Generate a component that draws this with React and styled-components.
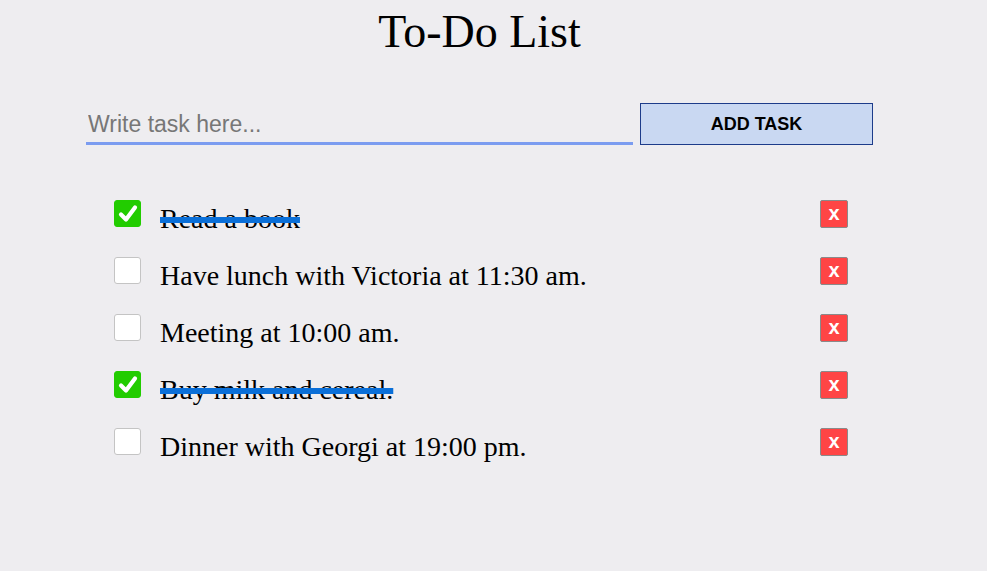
import styled, { createGlobalStyle } from "styled-components";
import { useState } from "react";

const GlobalStyle = createGlobalStyle`
  html, body {
    margin: 0;
    padding: 0;
    background-color: #eeedf0;
  }
  body {
    font-family: "Liberation Serif", "Times New Roman", serif;
    min-height: 571px;
  }
`;

const Wrapper = styled.div`
  width: 787px;
  margin-left: 86px;
  padding-top: 5px;
`;

const Title = styled.h1`
  margin: 0;
  text-align: center;
  font-family: "Liberation Serif", "Times New Roman", serif;
  font-weight: normal;
  font-size: 46px;
  color: #000;
`;

const Form = styled.form`
  display: flex;
  align-items: flex-end;
  gap: 7px;
  margin-top: 45px;
`;

const TaskInput = styled.input`
  width: 547px;
  box-sizing: border-box;
  height: 42px;
  padding: 4px 2px 0;
  border: none;
  border-bottom: 3px solid #7b9cf0;
  background: transparent;
  font-family: "Liberation Sans", Arial, sans-serif;
  font-size: 23px;
  color: #222;
  outline: none;

  &::placeholder {
    color: #777;
  }
`;

const AddButton = styled.button`
  width: 233px;
  height: 42px;
  box-sizing: border-box;
  background-color: #c9d8f2;
  border: 1px solid #1d3c8a;
  font-family: "Liberation Sans", Arial, sans-serif;
  font-weight: bold;
  font-size: 18px;
  color: #000;
  cursor: pointer;
`;

const List = styled.ul`
  list-style: none;
  margin: 45px 0 0;
  padding: 0 25px 0 28px;
`;

const Item = styled.li`
  display: flex;
  align-items: center;
  height: 57px;
`;

const Box = styled.span`
  width: 27px;
  height: 27px;
  box-sizing: border-box;
  flex-shrink: 0;
  margin-bottom: 10px;
  border-radius: 3px;
  display: flex;
  align-items: center;
  justify-content: center;
  background-color: ${(props) => (props.$checked ? "#22cc00" : "#fff")};
  border: 1px solid ${(props) => (props.$checked ? "#22cc00" : "#c4c4c4")};
  cursor: pointer;
`;

const TaskText = styled.span`
  flex: 1;
  margin-left: 19px;
  font-size: 28px;
  color: #000;
  text-decoration: ${(props) => (props.$done ? "line-through" : "none")};
  text-decoration-color: #0a6fd8;
  text-decoration-thickness: 6px;
`;

const DeleteButton = styled.button`
  width: 28px;
  height: 28px;
  flex-shrink: 0;
  margin-bottom: 10px;
  padding: 0 0 2px;
  background-color: #ff4545;
  border: 1px solid #8a8a8a;
  border-radius: 2px;
  color: #fff;
  font-family: "Liberation Sans", Arial, sans-serif;
  font-weight: bold;
  font-size: 20px;
  line-height: 1;
  cursor: pointer;
`;

const initialTasks = [
  { id: 1, text: "Read a book", done: true },
  { id: 2, text: "Have lunch with Victoria at 11:30 am.", done: false },
  { id: 3, text: "Meeting at 10:00 am.", done: false },
  { id: 4, text: "Buy milk and cereal.", done: true },
  { id: 5, text: "Dinner with Georgi at 19:00 pm.", done: false },
];

function Check() {
  return (
    <svg width="22" height="22" viewBox="0 0 22 22">
      <path
        d="M4 11.5 L9 16.5 L18 4.5"
        fill="none"
        stroke="#fff"
        strokeWidth="4.2"
        strokeLinecap="round"
        strokeLinejoin="round"
      />
    </svg>
  );
}

function App() {
  const [tasks, setTasks] = useState(initialTasks);
  const [value, setValue] = useState("");

  const toggleTask = (id) =>
    setTasks(tasks.map((t) => (t.id === id ? { ...t, done: !t.done } : t)));

  const removeTask = (id) => setTasks(tasks.filter((t) => t.id !== id));

  const addTask = (e) => {
    e.preventDefault();
    if (!value.trim()) return;
    setTasks([...tasks, { id: Date.now(), text: value, done: false }]);
    setValue("");
  };

  return (
    <>
      <GlobalStyle />
      <Wrapper>
        <Title>To-Do List</Title>
        <Form onSubmit={addTask}>
          <TaskInput
            placeholder="Write task here..."
            value={value}
            onChange={(e) => setValue(e.target.value)}
          />
          <AddButton type="submit">ADD TASK</AddButton>
        </Form>
        <List>
          {tasks.map((task) => (
            <Item key={task.id}>
              <Box $checked={task.done} onClick={() => toggleTask(task.id)}>
                {task.done && <Check />}
              </Box>
              <TaskText $done={task.done}>{task.text}</TaskText>
              <DeleteButton onClick={() => removeTask(task.id)}>x</DeleteButton>
            </Item>
          ))}
        </List>
      </Wrapper>
    </>
  );
}

export default App;
